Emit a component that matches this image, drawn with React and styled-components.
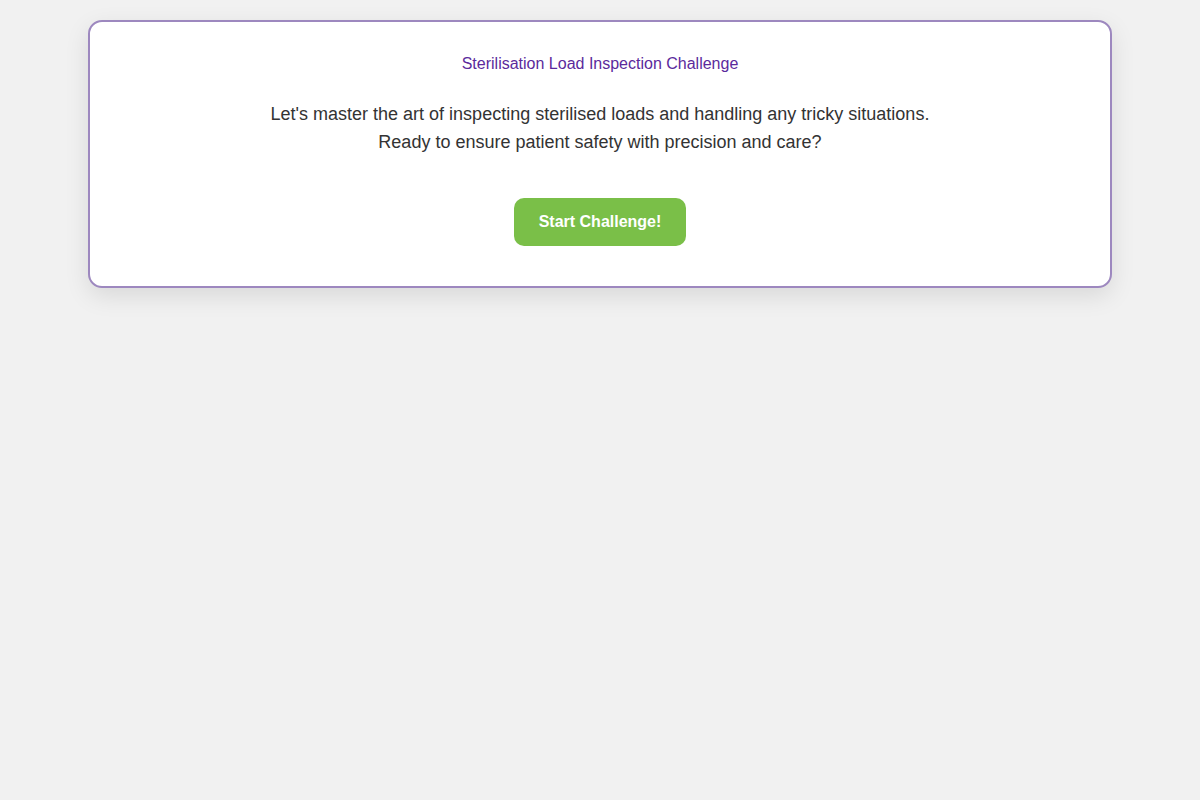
import React from 'react';
import styled, { createGlobalStyle } from 'styled-components';

const GlobalStyle = createGlobalStyle`
	html, body {
		margin: 0;
		padding: 0;
		background: #f1f1f1;
		font-family: "Liberation Sans", Arial, sans-serif;
	}
`;

const Page = styled.div`
	min-height: 800px;
	padding-top: 20px;
	box-sizing: border-box;
`;

const Card = styled.div`
	width: 1024px;
	margin: 0 auto;
	box-sizing: border-box;
	background: #fff;
	border: 2px solid #9d88bf;
	border-radius: 14px;
	box-shadow: 0 8px 24px rgba(0, 0, 0, 0.1);
	padding: 33px 40px 40px;
	text-align: center;
`;

const Title = styled.h2`
	margin: 0 0 27px;
	font-size: 16px;
	font-weight: normal;
	line-height: 18px;
	color: #5b2a9c;
`;

const Intro = styled.p`
	margin: 0 0 42px;
	font-size: 18px;
	line-height: 28px;
	color: #333;
`;

const StartButton = styled.button`
	width: 172px;
	height: 48px;
	border: none;
	border-radius: 10px;
	background: #7abf48;
	color: #fff;
	font-family: "Liberation Sans", Arial, sans-serif;
	font-size: 16px;
	font-weight: bold;
	cursor: pointer;
`;

const App = () => (
	<Page>
		<GlobalStyle />
		<Card>
			<Title>Sterilisation Load Inspection Challenge</Title>
			<Intro>
				Let's master the art of inspecting sterilised loads and handling any tricky situations.
				<br />
				Ready to ensure patient safety with precision and care?
			</Intro>
			<StartButton>Start Challenge!</StartButton>
		</Card>
	</Page>
);

export default App;
